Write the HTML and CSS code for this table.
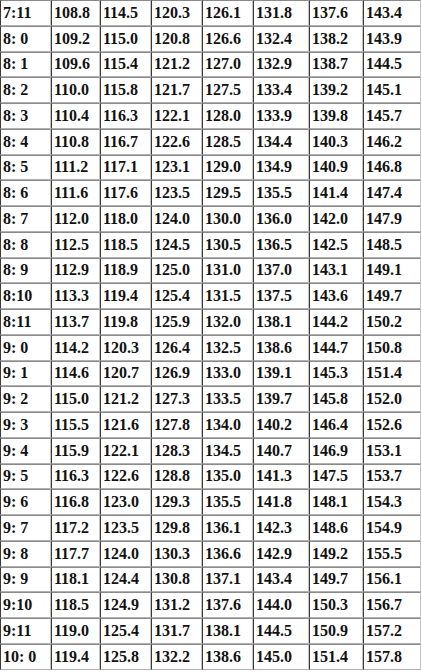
FILE: index.html
```html
<!DOCTYPE html>
<html>
<head>
<meta charset="utf-8">
<link rel="stylesheet" href="styles.css">
</head>
<body>
<table class="grid">
<colgroup>
<col class="c0"><col class="c1"><col class="c2"><col class="c3"><col class="c4"><col class="c5"><col class="c6"><col class="c7">
</colgroup>
<tbody>
<tr><td>7:11</td><td>108.8</td><td>114.5</td><td>120.3</td><td>126.1</td><td>131.8</td><td>137.6</td><td>143.4</td></tr>
<tr><td>8: 0</td><td>109.2</td><td>115.0</td><td>120.8</td><td>126.6</td><td>132.4</td><td>138.2</td><td>143.9</td></tr>
<tr><td>8: 1</td><td>109.6</td><td>115.4</td><td>121.2</td><td>127.0</td><td>132.9</td><td>138.7</td><td>144.5</td></tr>
<tr><td>8: 2</td><td>110.0</td><td>115.8</td><td>121.7</td><td>127.5</td><td>133.4</td><td>139.2</td><td>145.1</td></tr>
<tr><td>8: 3</td><td>110.4</td><td>116.3</td><td>122.1</td><td>128.0</td><td>133.9</td><td>139.8</td><td>145.7</td></tr>
<tr><td>8: 4</td><td>110.8</td><td>116.7</td><td>122.6</td><td>128.5</td><td>134.4</td><td>140.3</td><td>146.2</td></tr>
<tr><td>8: 5</td><td>111.2</td><td>117.1</td><td>123.1</td><td>129.0</td><td>134.9</td><td>140.9</td><td>146.8</td></tr>
<tr><td>8: 6</td><td>111.6</td><td>117.6</td><td>123.5</td><td>129.5</td><td>135.5</td><td>141.4</td><td>147.4</td></tr>
<tr><td>8: 7</td><td>112.0</td><td>118.0</td><td>124.0</td><td>130.0</td><td>136.0</td><td>142.0</td><td>147.9</td></tr>
<tr><td>8: 8</td><td>112.5</td><td>118.5</td><td>124.5</td><td>130.5</td><td>136.5</td><td>142.5</td><td>148.5</td></tr>
<tr><td>8: 9</td><td>112.9</td><td>118.9</td><td>125.0</td><td>131.0</td><td>137.0</td><td>143.1</td><td>149.1</td></tr>
<tr><td>8:10</td><td>113.3</td><td>119.4</td><td>125.4</td><td>131.5</td><td>137.5</td><td>143.6</td><td>149.7</td></tr>
<tr><td>8:11</td><td>113.7</td><td>119.8</td><td>125.9</td><td>132.0</td><td>138.1</td><td>144.2</td><td>150.2</td></tr>
<tr><td>9: 0</td><td>114.2</td><td>120.3</td><td>126.4</td><td>132.5</td><td>138.6</td><td>144.7</td><td>150.8</td></tr>
<tr><td>9: 1</td><td>114.6</td><td>120.7</td><td>126.9</td><td>133.0</td><td>139.1</td><td>145.3</td><td>151.4</td></tr>
<tr><td>9: 2</td><td>115.0</td><td>121.2</td><td>127.3</td><td>133.5</td><td>139.7</td><td>145.8</td><td>152.0</td></tr>
<tr><td>9: 3</td><td>115.5</td><td>121.6</td><td>127.8</td><td>134.0</td><td>140.2</td><td>146.4</td><td>152.6</td></tr>
<tr><td>9: 4</td><td>115.9</td><td>122.1</td><td>128.3</td><td>134.5</td><td>140.7</td><td>146.9</td><td>153.1</td></tr>
<tr><td>9: 5</td><td>116.3</td><td>122.6</td><td>128.8</td><td>135.0</td><td>141.3</td><td>147.5</td><td>153.7</td></tr>
<tr><td>9: 6</td><td>116.8</td><td>123.0</td><td>129.3</td><td>135.5</td><td>141.8</td><td>148.1</td><td>154.3</td></tr>
<tr><td>9: 7</td><td>117.2</td><td>123.5</td><td>129.8</td><td>136.1</td><td>142.3</td><td>148.6</td><td>154.9</td></tr>
<tr><td>9: 8</td><td>117.7</td><td>124.0</td><td>130.3</td><td>136.6</td><td>142.9</td><td>149.2</td><td>155.5</td></tr>
<tr><td>9: 9</td><td>118.1</td><td>124.4</td><td>130.8</td><td>137.1</td><td>143.4</td><td>149.7</td><td>156.1</td></tr>
<tr><td>9:10</td><td>118.5</td><td>124.9</td><td>131.2</td><td>137.6</td><td>144.0</td><td>150.3</td><td>156.7</td></tr>
<tr><td>9:11</td><td>119.0</td><td>125.4</td><td>131.7</td><td>138.1</td><td>144.5</td><td>150.9</td><td>157.2</td></tr>
<tr><td>10: 0</td><td>119.4</td><td>125.8</td><td>132.2</td><td>138.6</td><td>145.0</td><td>151.4</td><td>157.8</td></tr>
</tbody>
</table>
</body>
</html>
```
FILE: styles.css
```css
html, body {
  margin: 0;
  padding: 0;
  background: #ffffff;
}
.grid {
  table-layout: fixed;
  width: 421px;
  border-collapse: separate;
  border-spacing: 0;
  font-family: "Liberation Serif", "Times New Roman", serif;
  font-weight: bold;
  font-size: 16px;
  color: #111;
}
.c0 { width: 51px; }
.c1 { width: 49px; }
.c2 { width: 51px; }
.c3 { width: 51px; }
.c4 { width: 51px; }
.c5 { width: 56px; }
.c6 { width: 54px; }
.c7 { width: 58px; }
.grid tr { height: 25.75px; }
.grid td {
  padding: 0 0 0 2px;
  white-space: pre;
  overflow: hidden;
  vertical-align: middle;
  line-height: 18px;
  border-top: 1px solid #8a8a8a;
  border-left: 1px solid #3a3a3a;
  border-right: 1px solid #c4c4c4;
  border-bottom: 1px solid #b0b0b0;
}
```
